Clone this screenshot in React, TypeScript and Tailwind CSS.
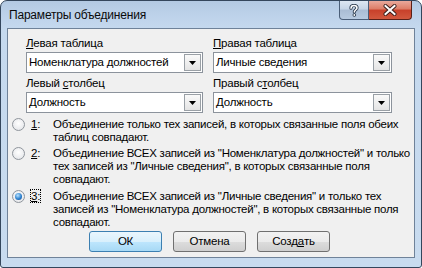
import React from "react";

function Combo({ value }: { value: string }) {
  return (
    <div className="h-[21px] w-full border border-[#8c939c] bg-white flex items-center">
      <div className="flex-1 pl-[2px] leading-[13px] text-black whitespace-nowrap overflow-hidden">
        {value}
      </div>
      <div className="w-[17px] h-[17px] mr-[1px] shrink-0 border border-[#9aa0a6] bg-[linear-gradient(180deg,#fafafa,#e4e4e4)] flex items-center justify-center">
        <svg width="7" height="4" viewBox="0 0 7 4">
          <path d="M0 0H7L3.5 4Z" fill="#000" />
        </svg>
      </div>
    </div>
  );
}

function Radio({ checked }: { checked?: boolean }) {
  return (
    <div className="w-[13px] h-[13px] shrink-0 rounded-full border border-[#8f959c] bg-[radial-gradient(circle_at_50%_40%,#ffffff,#dfe1e5)] flex items-center justify-center">
      {checked && (
        <div className="w-[7px] h-[7px] rounded-full bg-[radial-gradient(circle_at_40%_35%,#b8e2ff,#2f83cf_55%,#0c3f8a)]" />
      )}
    </div>
  );
}

function Btn({ children, def }: { children: React.ReactNode; def?: boolean }) {
  return (
    <div
      className={
        def
          ? "w-[73px] h-[21px] shrink-0 rounded-[3px] border border-[#3c7fb1] bg-[linear-gradient(180deg,#eaf6fd_0%,#d9f0fc_50%,#bee6fd_51%,#a7d9f5_100%)] flex items-center justify-center text-black"
          : "w-[73px] h-[21px] shrink-0 rounded-[3px] border border-[#707070] bg-[linear-gradient(180deg,#f2f2f2_0%,#ebebeb_50%,#dddddd_51%,#cfcfcf_100%)] flex items-center justify-center text-black"
      }
    >
      {children}
    </div>
  );
}

export default function App() {
  return (
    <div className="w-[422px] h-[268px] font-['Liberation_Sans',Arial,sans-serif] text-black text-[11.5px] tracking-[-0.2px]">
      <div className="w-[422px] h-[268px] rounded-t-[7px] rounded-b-[3px] border border-[#34465c] bg-[linear-gradient(180deg,#b3c9e3_0px,#bdd2ea_14px,#c5d9ee_28px,#c8dbef_100%)] flex flex-col">
        {/* title bar */}
        <div className="h-[27px] shrink-0 flex items-start">
          <div className="pl-[8px] pt-[8px] text-[12px] leading-[13px] text-[#0a0a0a]">Параметры объединения</div>
          <div className="flex-1" />
          <div className="flex mr-[9px]">
            <div className="w-[30px] h-[19px] rounded-bl-[4px] border border-[#4a5e78] border-t-0 bg-[linear-gradient(180deg,#dde7f2_0%,#c6d5e6_45%,#aabdd4_50%,#b7cae0_100%)] flex items-center justify-center">
              <svg width="10" height="13" viewBox="0 0 10 13">
                <path d="M2 4.2C2 2.4 3.3 1.5 5 1.5C6.8 1.5 8 2.5 8 4C8 5.6 5.3 6 5.3 8" fill="none" stroke="#2b3a4d" strokeWidth="3.2" strokeLinecap="round" />
                <circle cx="5.3" cy="11" r="1.8" fill="#2b3a4d" />
                <path d="M2 4.2C2 2.4 3.3 1.5 5 1.5C6.8 1.5 8 2.5 8 4C8 5.6 5.3 6 5.3 8" fill="none" stroke="#fff" strokeWidth="1.5" strokeLinecap="round" />
                <circle cx="5.3" cy="11" r="0.9" fill="#fff" />
              </svg>
            </div>
            <div className="w-[43px] h-[19px] rounded-br-[4px] border border-[#5a2018] border-t-0 border-l-0 bg-[linear-gradient(180deg,#e9a99b_0%,#dc7c66_45%,#c8402a_50%,#d2583e_100%)] flex items-center justify-center">
              <svg width="14" height="12" viewBox="0 0 14 12">
                <path d="M2.5 2L11.5 10M11.5 2L2.5 10" stroke="#3a1d1a" strokeWidth="4" strokeLinecap="round" />
                <path d="M2.5 2L11.5 10M11.5 2L2.5 10" stroke="#fff" strokeWidth="2" strokeLinecap="square" />
              </svg>
            </div>
          </div>
        </div>
        {/* client */}
        <div className="mx-[6px] h-[230px] shrink-0 border border-[#6f8299] bg-[#f0f0f0] flex flex-col leading-[13px]">
          <div className="pl-[18px] pt-[8px] grid grid-cols-[177px_179px] gap-x-[10px]">
            <div>
              <u>Л</u>евая таблица
            </div>
            <div>
              <u>П</u>равая таблица
            </div>
            <div className="mt-[2px]">
              <Combo value="Номенклатура должностей" />
            </div>
            <div className="mt-[2px]">
              <Combo value="Личные сведения" />
            </div>
            <div className="mt-[4px]">
              Левый <u>с</u>толбец
            </div>
            <div className="mt-[4px]">
              Правый с<u>т</u>олбец
            </div>
            <div className="mt-[2px]">
              <Combo value="Должность" />
            </div>
            <div className="mt-[2px]">
              <Combo value="Должность" />
            </div>
          </div>
          <div className="flex flex-col pl-[4px] mt-[5px]">
            <div className="flex">
              <div className="w-[19px] shrink-0">
                <Radio />
              </div>
              <div className="w-[22px] shrink-0">
                <u>1</u>:
              </div>
              <div className="whitespace-nowrap tracking-[-0.25px]">
                <div>Объединение только тех записей, в которых связанные поля обеих</div>
                <div>таблиц совпадают.</div>
              </div>
            </div>
            <div className="flex mt-[3px]">
              <div className="w-[19px] shrink-0">
                <Radio />
              </div>
              <div className="w-[22px] shrink-0">
                <u>2</u>:
              </div>
              <div className="whitespace-nowrap tracking-[-0.25px]">
                <div>Объединение ВСЕХ записей из "Номенклатура должностей" и только</div>
                <div>тех записей из "Личные сведения", в которых связанные поля</div>
                <div>совпадают.</div>
              </div>
            </div>
            <div className="flex mt-[4px]">
              <div className="w-[19px] shrink-0">
                <Radio checked />
              </div>
              <div className="w-[22px] shrink-0">
                <span className="border border-dotted border-black -ml-[1px]">
                  <u>3</u>:
                </span>
              </div>
              <div className="whitespace-nowrap tracking-[-0.25px]">
                <div>Объединение ВСЕХ записей из "Личные сведения" и только тех</div>
                <div>записей из "Номенклатура должностей", в которых связанные поля</div>
                <div>совпадают.</div>
              </div>
            </div>
          </div>
          <div className="flex pl-[81px] gap-[11px] mt-[2px]">
            <Btn def>ОК</Btn>
            <Btn>Отмена</Btn>
            <Btn>
              Созд<u>а</u>ть
            </Btn>
          </div>
        </div>
      </div>
    </div>
  );
}
